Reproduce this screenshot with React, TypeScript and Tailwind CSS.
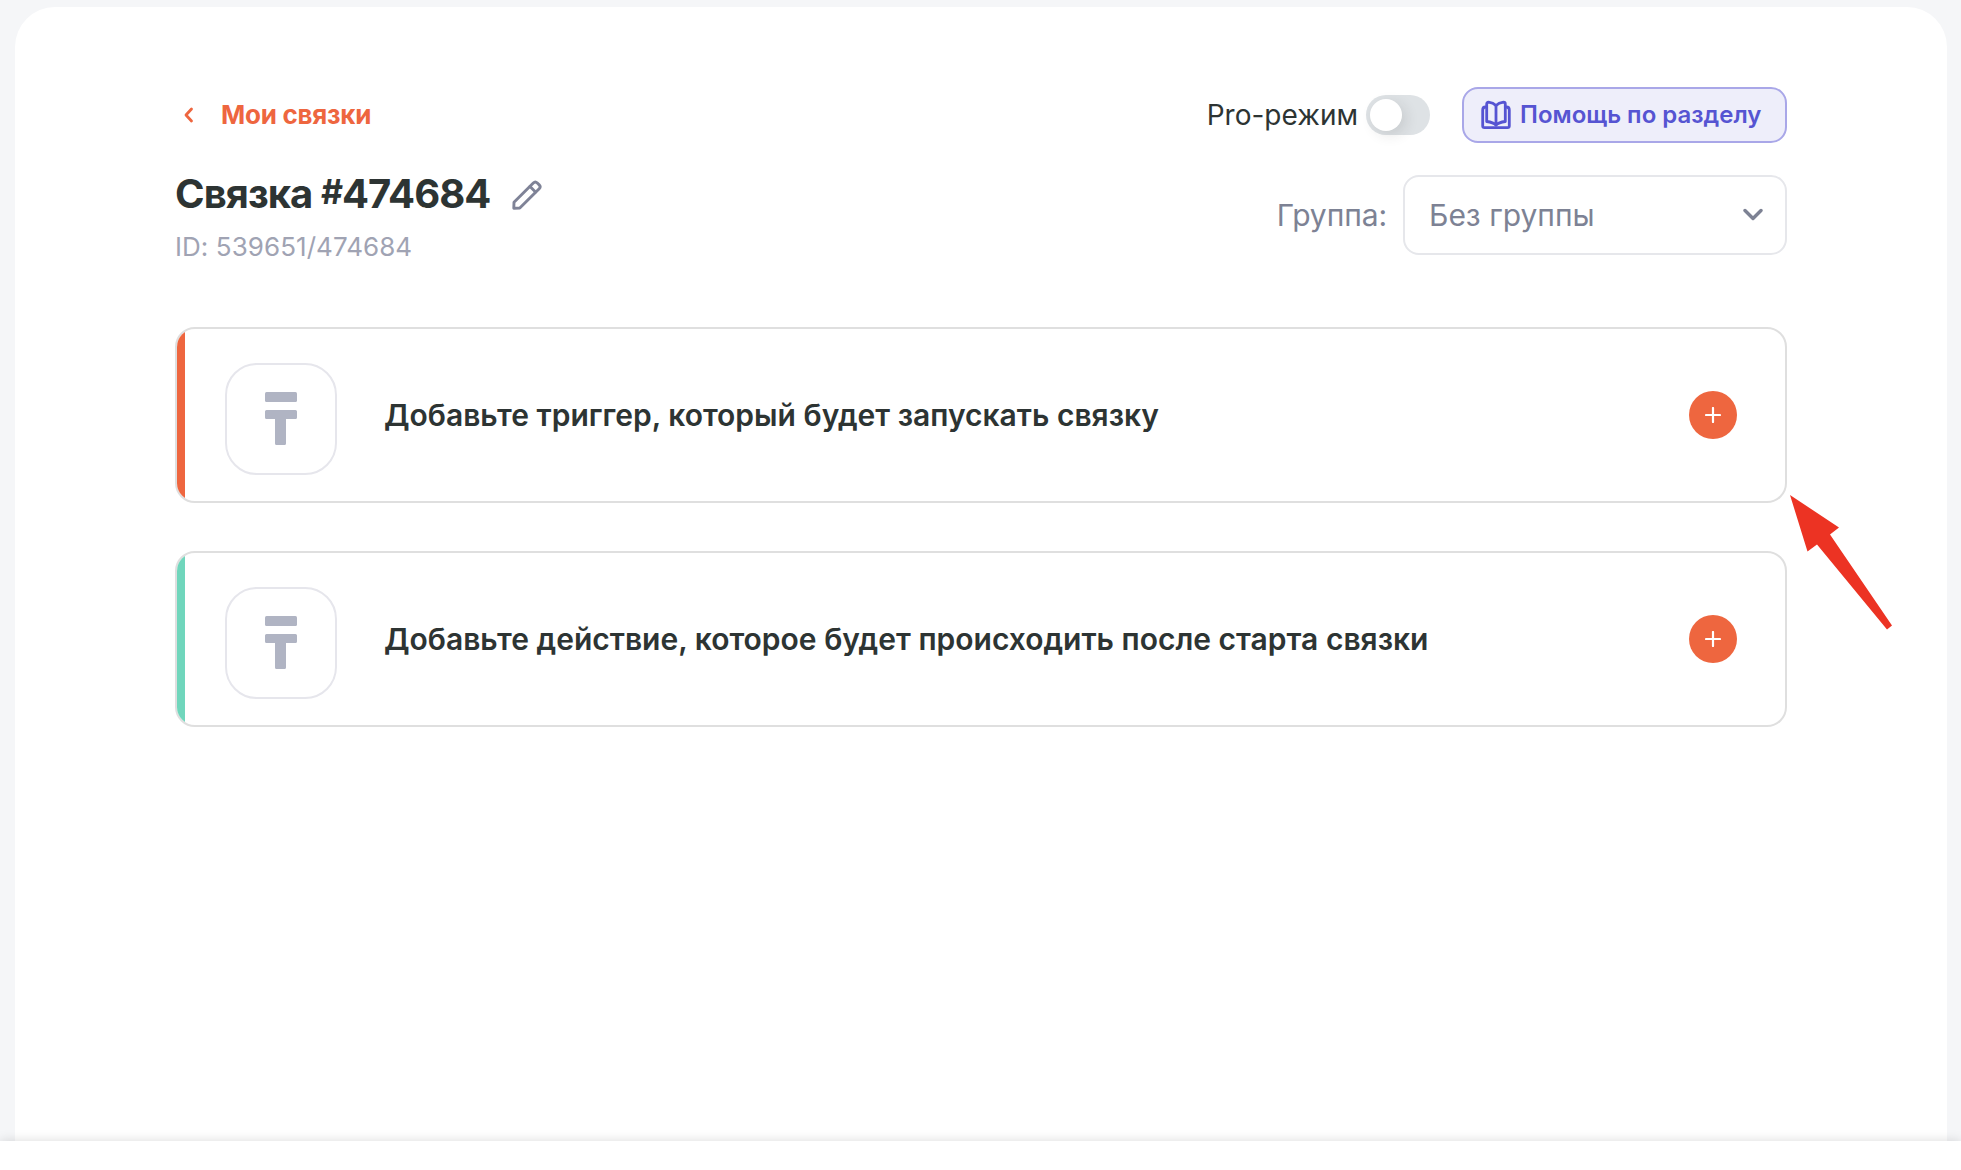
function BookIcon() {
  return (
    <svg width="32" height="30" viewBox="0 0 32 30" fill="none" stroke="#5654d2" strokeWidth="2.8" strokeLinecap="round" strokeLinejoin="round">
      <path d="M16 5.5C14 3.500 11.500 2.600 8.500 2.200Q6.700 2.200 6.700 4V21.500C10.500 22 14 23 16 25C18 23 21.500 22 25.300 21.500V4Q25.300 2.200 23.500 2.200C20.500 2.600 18 3.500 16 5.500Z" />
      <path d="M16 6V25" />
      <path d="M6.700 7H5.500C3.500 7 2.700 8 2.700 10V26Q2.700 27.600 4.500 27.600H27.500Q29.300 27.600 29.300 26V10C29.300 8 28.500 7 26.500 7H25.300" />
    </svg>
  );
}

function PencilIcon() {
  return (
    <svg width="30" height="30" viewBox="0 0 30 30" fill="none" stroke="#7f8397" strokeWidth="2.900" strokeLinejoin="round" strokeLinecap="round">
      <path d="M1.800 28.200L2 22.300L21.300 3C22.600 1.700 24 1.700 25.300 3L27.200 4.900C28.400 6.100 28.400 7.500 27.200 8.700L7.800 28L1.800 28.200Z" />
      <path d="M18 6.500L23.500 12" />
    </svg>
  );
}

function StepCard({ text, trigger }: { text: string; trigger?: boolean }) {
  return (
    <div className="flex h-[176px] items-stretch overflow-hidden rounded-[20px] border-2 border-[#dfdfdf] bg-white">
      <div className={trigger ? "w-2 bg-[#ee663f]" : "w-2 bg-[#70d6bc]"} />
      <div className="ml-10 mt-[34px] flex size-[112px] shrink-0 items-center justify-center rounded-[32px] border-2 border-[#e6e6ec]">
        <svg width="32" height="53" viewBox="0 0 32 53" fill="#b0b4c3" className="-mt-0.5">
          <rect width="32" height="10" rx="1.500" />
          <path d="M1.500 18H30.500Q32 18 32 19.500V25.500Q32 27 30.500 27H21V51.500Q21 53 19.500 53H11.500Q10 53 10 51.500V27H1.500Q0 27 0 25.500V19.500Q0 18 1.500 18Z" />
        </svg>
      </div>
      <div className="ml-[47px] flex flex-1 items-center text-[30px] font-semibold whitespace-nowrap text-[#2d3433]">{text}</div>
      <button className="mr-12 flex size-12 shrink-0 items-center justify-center self-center rounded-full bg-[#ee663f]">
        <svg width="16" height="16" viewBox="0 0 16 16" stroke="#fff" strokeWidth="2.200" strokeLinecap="round">
          <path d="M8 1V15M1 8H15" />
        </svg>
      </button>
    </div>
  );
}

export default function App() {
  return (
    <div className="relative flex h-[1170px] w-[1961px] flex-col overflow-hidden bg-[#f5f6f8] font-['Inter',sans-serif]">
      <main className="mt-[7px] mr-[14px] ml-[15px] h-[1134px] rounded-t-[40px] bg-white px-40 pt-20">
        <div className="flex h-14 items-center justify-between">
          <a className="flex items-center text-[26px] font-bold tracking-[-0.25px] text-[#ee663f]">
            <svg width="10" height="16" viewBox="0 0 10 16" fill="none" stroke="#ee663f" strokeWidth="2.800" strokeLinecap="round" strokeLinejoin="round" className="mr-[27px] ml-[9px]">
              <path d="M7.500 2L2 8L7.500 14" />
            </svg>
            <span className="pb-0.5">Мои связки</span>
          </a>
          <div className="flex items-center">
            <span className="text-[28px] text-[#2d3433]">Pro-режим</span>
            <span className="ml-2 flex h-10 w-16 items-center rounded-full bg-[#dee2e5] p-1">
              <span className="size-8 rounded-full bg-white shadow-[4px_4px_14px_rgba(39,39,39,0.12)]" />
            </span>
            <button className="ml-8 flex h-14 w-[325px] items-center rounded-2xl border-2 border-[#a9a7e8] bg-[#eeeefa] pl-4 text-[24px] font-semibold whitespace-nowrap text-[#5654d2]">
              <BookIcon />
              <span className="ml-2">Помощь по разделу</span>
            </button>
          </div>
        </div>
        <div className="mt-[25px] flex h-24 items-start justify-between">
          <div>
            <div className="flex h-[52px] items-center">
              <h1 className="w-[316px] text-[40px] leading-[52px] font-bold tracking-[-0.95px] whitespace-nowrap text-[#2d3433]">
                Связка <span className="relative -top-1 text-[34px] leading-none">#</span>
                <span>474684</span>
              </h1>
              <span className="mt-0.5 ml-[21px]">
                <PencilIcon />
              </span>
            </div>
            <p className="mt-[11px] text-[26px] leading-8 tracking-[0.06px] text-[#a0a3b3]">ID: 539651/474684</p>
          </div>
          <div className="mt-[7px] flex items-center text-[30px] text-[#7d8294]">
            <span className="tracking-[-0.1px]">Группа:</span>
            <div className="ml-4 flex h-20 w-[384px] items-center justify-between rounded-2xl border-2 border-[#e6e7eb] pr-[22px] pl-6">
              <span>Без группы</span>
              <svg width="20" height="14" viewBox="0 0 20 14" fill="none" stroke="#7d8294" strokeWidth="3.400" strokeLinecap="round" strokeLinejoin="round">
                <path d="M2 2.500L10 10.500L18 2.500" />
              </svg>
            </div>
          </div>
        </div>
        <div className="mt-[63px] flex flex-col gap-12">
          <StepCard trigger text="Добавьте триггер, который будет запускать связку" />
          <StepCard text="Добавьте действие, которое будет происходить после старта связки" />
        </div>
      </main>
      <footer className="h-[29px] w-full shrink-0 bg-white shadow-[0_0_12px_rgba(0,0,0,0.15)]" />
      <svg className="absolute left-[1788px] top-[493px]" width="106" height="138" viewBox="0 0 106 138" fill="#ec3323">
        <path d="M2 2L51 34.500L42 41.500L104 132.500L99 136.500L29 51.500L19.500 58.500Z" />
      </svg>
    </div>
  );
}
